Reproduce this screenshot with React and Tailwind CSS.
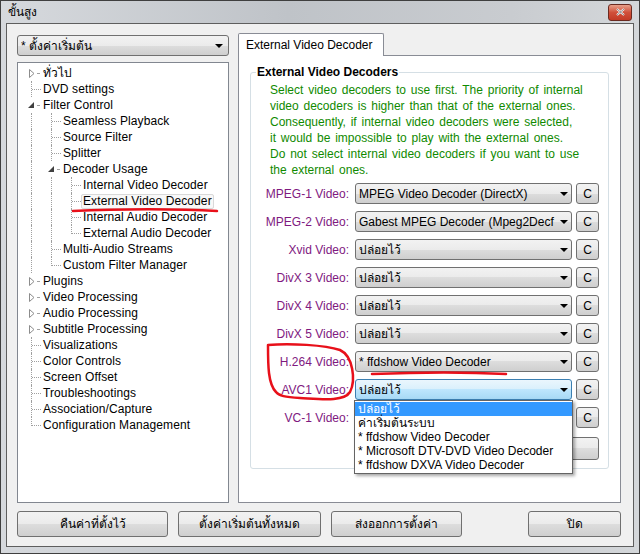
import React from 'react';

const tree = [
  { t: 'ทั่วไป', g: ['closed'] },
  { t: 'DVD settings', g: ['tee'] },
  { t: 'Filter Control', g: ['open'] },
  { t: 'Seamless Playback', g: ['line', 'tee'] },
  { t: 'Source Filter', g: ['line', 'tee'] },
  { t: 'Splitter', g: ['line', 'tee'] },
  { t: 'Decoder Usage', g: ['line', 'open'] },
  { t: 'Internal Video Decoder', g: ['line', 'line', 'tee'] },
  { t: 'External Video Decoder', g: ['line', 'line', 'tee'], sel: true },
  { t: 'Internal Audio Decoder', g: ['line', 'line', 'tee'] },
  { t: 'External Audio Decoder', g: ['line', 'line', 'end'] },
  { t: 'Multi-Audio Streams', g: ['line', 'tee'] },
  { t: 'Custom Filter Manager', g: ['line', 'end'] },
  { t: 'Plugins', g: ['closed'] },
  { t: 'Video Processing', g: ['closed'] },
  { t: 'Audio Processing', g: ['closed'] },
  { t: 'Subtitle Processing', g: ['closed'] },
  { t: 'Visualizations', g: ['tee'] },
  { t: 'Color Controls', g: ['tee'] },
  { t: 'Screen Offset', g: ['tee'] },
  { t: 'Troubleshootings', g: ['tee'] },
  { t: 'Association/Capture', g: ['tee'] },
  { t: 'Configuration Management', g: ['end'] },
];

// VC-1 value sits under the open list, so it is left blank
const decoders = [
  ['MPEG-1 Video:', 'MPEG Video Decoder (DirectX)'],
  ['MPEG-2 Video:', 'Gabest MPEG Decoder (Mpeg2Decf'],
  ['Xvid Video:', 'ปล่อยไว้'],
  ['DivX 3 Video:', 'ปล่อยไว้'],
  ['DivX 4 Video:', 'ปล่อยไว้'],
  ['DivX 5 Video:', 'ปล่อยไว้'],
  ['H.264 Video:', '* ffdshow Video Decoder'],
  ['AVC1 Video:', 'ปล่อยไว้'],
  ['VC-1 Video:', ''],
];

const options = [
  'ปล่อยไว้',
  'ค่าเริ่มต้นระบบ',
  '* ffdshow Video Decoder',
  '* Microsoft DTV-DVD Video Decoder',
  '* ffdshow DXVA Video Decoder',
];

const btnBg =
  'border border-[#707070] rounded-[3px] bg-[linear-gradient(#f2f2f2,#ebebeb_50%,#dddddd_50%,#cfcfcf)]';

const Arrow = () => (
  <svg width="8" height="4" viewBox="0 0 8 4" className="shrink-0">
    <path d="M0 0h8L4 4z" fill="#000" />
  </svg>
);

const Combo = ({ value, focused, className = '' }) => (
  <div
    className={`flex h-[21px] items-center rounded-[3px] border pl-[3px] pr-[3px] ${
      focused
        ? 'border-[#3c7fb1] bg-[linear-gradient(#eaf6fd,#d9f0fc_50%,#bee6fd_50%,#a7d9f5)]'
        : 'border-[#707070] bg-[linear-gradient(#f2f2f2,#ebebeb_50%,#dddddd_50%,#cfcfcf)]'
    } ${className}`}
  >
    <span className="flex-1 overflow-hidden whitespace-nowrap">{value}</span>
    <Arrow />
  </div>
);

const Guide = ({ type }) => {
  const v = 'absolute left-[10px] border-l border-dotted border-[#a0a0a0]';
  const h = 'absolute left-[11px] top-[8px] w-[9px] border-t border-dotted border-[#a0a0a0]';
  return (
    <div className="relative h-[16px] w-[20px] shrink-0">
      {type === 'line' && <div className={`${v} top-0 h-[16px]`} />}
      {type === 'tee' && (
        <>
          <div className={`${v} top-0 h-[16px]`} />
          <div className={h} />
        </>
      )}
      {type === 'end' && (
        <>
          <div className={`${v} top-0 h-[9px]`} />
          <div className={h} />
        </>
      )}
      {type === 'closed' && (
        <>
          <svg width="6" height="9" viewBox="0 0 6 9" className="absolute left-[8px] top-[4px]">
            <path d="M0.5 0.5L5 4.5L0.5 8.5Z" fill="#fff" stroke="#8c8c8c" />
          </svg>
          <div className="absolute left-[16px] top-[8px] w-[2px] border-t border-dotted border-[#a0a0a0]" />
        </>
      )}
      {type === 'open' && (
        <>
          <svg width="6" height="6" viewBox="0 0 6 6" className="absolute left-[7px] top-[5px]">
            <path d="M6 0V6H0Z" fill="#404040" />
          </svg>
          <div className="absolute left-[16px] top-[8px] w-[2px] border-t border-dotted border-[#a0a0a0]" />
        </>
      )}
    </div>
  );
};

export default function App() {
  return (
    <div className="relative h-[554px] w-[640px] overflow-hidden font-['Liberation_Sans','Noto_Sans',sans-serif] text-[12px] text-black">
      <div className="flex h-full flex-col border border-[#3f3f3f] bg-[linear-gradient(90deg,#d6d9dd,#bfc3c8_45%,#c9ccd0_80%,#d4d7da)]">
        {/* Title bar */}
        <div className="flex h-[22px] shrink-0 items-center justify-between pl-[7px] pr-[7px]">
          <span className="text-[12px]">ขั้นสูง</span>
          <div className="flex h-[17px] w-[24px] items-center justify-center rounded-[3px] border border-[#6b2a20] bg-[linear-gradient(#e8a08a,#d0503a_50%,#c23a25)]">
            <svg width="9" height="8" viewBox="0 0 9 8">
              <path d="M1 1L8 7M8 1L1 7" stroke="#fff" strokeWidth="2" />
              <path d="M1 1L8 7M8 1L1 7" stroke="#3a3a3a" strokeWidth="0.6" />
            </svg>
          </div>
        </div>

        {/* Client */}
        <div className="mx-[5px] mb-[6px] flex flex-1 flex-col border border-[#5e5e5e] bg-[#f0f0f0] pl-[10px] pr-[12px] pt-[9px]">
          <div className="flex h-[470px] gap-[9px]">
            {/* Left column */}
            <div className="mt-[2px] flex w-[212px] flex-col gap-[6px]">
              <Combo value="* ตั้งค่าเริ่มต้น" className="pr-[5px]" />
              <div className="flex-1 border border-[#828790] bg-white pl-[3px] pt-[2px]">
                {tree.map((n) => (
                  <div key={n.t} className="flex h-[16px] items-center">
                    {n.g.map((g, i) => (
                      <Guide key={i} type={g} />
                    ))}
                    <span
                      className={`h-[15px] whitespace-nowrap rounded-[2px] border px-[1px] leading-[13px] tracking-[0.1px] ${
                        n.sel ? 'border-[#d9d9d9] bg-[#f8f8f8]' : 'border-transparent'
                      }`}
                    >
                      {n.t}
                    </span>
                  </div>
                ))}
              </div>
            </div>

            {/* Right column */}
            <div className="flex flex-1 flex-col">
              <div className="relative z-10 -mb-px flex h-[23px] w-[146px] items-center rounded-t-[2px] border border-b-0 border-[#898c95] bg-white pl-[7px]">
                External Video Decoder
              </div>
              <div className="flex-1 border border-[#898c95] bg-white px-[11px] pt-[8px]">
                <fieldset className="rounded-[3px] border border-[#d5dfe5] pb-[8px]">
                  <legend className="ml-[5px] px-[1px] text-[12px] font-bold leading-[16px]">
                    External Video Decoders
                  </legend>
                  <div className="mt-[2px] pl-[19px] leading-[16px] text-[#108a00] [word-spacing:1.5px]">
                    <div>Select video decoders to use first. The priority of internal</div>
                    <div>video decoders is higher than that of the external ones.</div>
                    <div>Consequently, if internal video decoders were selected,</div>
                    <div>it would be impossible to play with the external ones.</div>
                    <div>Do not select internal video decoders if you want to use</div>
                    <div>the external ones.</div>
                  </div>
                  <div className="mt-[5px] flex flex-col gap-[7px]">
                    {decoders.map(([label, value]) => (
                      <div key={label} className="flex h-[21px] items-center">
                        <div className="w-[99px] pr-[1px] text-right text-[#80197f]">{label}</div>
                        <div className="relative ml-[5px] w-[217px]">
                          <Combo value={value} focused={label === 'AVC1 Video:'} />
                          {label === 'AVC1 Video:' && (
                            <div className="absolute left-[-1px] top-[21px] z-20 w-[219px] border border-[#646464] bg-white py-[1px] shadow-[2px_2px_3px_rgba(0,0,0,0.35)]">
                              {options.map((o, i) => (
                                <div
                                  key={o}
                                  className={`h-[14px] whitespace-nowrap pl-[3px] leading-[14px] ${
                                    i === 0 ? 'bg-[#3399ff] text-white' : ''
                                  }`}
                                >
                                  {o}
                                </div>
                              ))}
                            </div>
                          )}
                        </div>
                        <div className={`ml-[4px] flex h-[21px] w-[23px] items-center justify-center ${btnBg}`}>C</div>
                      </div>
                    ))}
                  </div>
                  <div className={`ml-[104px] mt-[9px] h-[23px] w-[244px] ${btnBg}`} />
                </fieldset>
              </div>
            </div>
          </div>

          {/* Bottom buttons */}
          <div className="mt-[8px] flex h-[26px]">
            <div className={`flex w-[151px] items-center justify-center ${btnBg}`}>คืนค่าที่ตั้งไว้</div>
            <div className={`ml-[10px] flex w-[143px] items-center justify-center ${btnBg}`}>ตั้งค่าเริ่มต้นทั้งหมด</div>
            <div className={`ml-[10px] flex w-[131px] items-center justify-center ${btnBg}`}>ส่งออกการตั้งค่า</div>
            <div className={`ml-auto flex w-[93px] items-center justify-center ${btnBg}`}>ปิด</div>
          </div>
        </div>
      </div>

      {/* Red hand-drawn annotations */}
      <svg className="pointer-events-none absolute inset-0" width="640" height="554" viewBox="0 0 640 554">
        <g fill="none" stroke="#e8101a" strokeWidth="2.5" strokeLinecap="round">
          <path d="M73 211C120 208.5 180 208.5 217 211" />
          <path d="M268 345C290 343 325 345 340 350C353 356 356 380 350 392C344 402 320 399 300 398C285 397 279 396 276 392C268 384 268 365 268 345" />
          <path d="M372 374C420 372 470 372 506 374" />
          <path d="M368 446C420 444 470 445 507 447" />
        </g>
      </svg>
    </div>
  );
}
